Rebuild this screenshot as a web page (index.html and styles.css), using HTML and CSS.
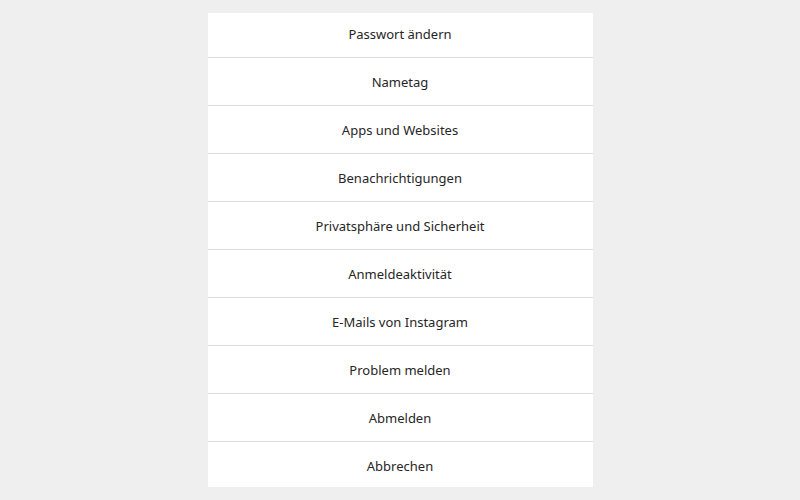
FILE: index.html
```html
<!DOCTYPE html>
<html lang="de">
<head>
    <meta charset="UTF-8">
    <meta name="viewport" content="width=device-width, initial-scale=1.0">
    <title>Einstellungen</title>
    <link rel="stylesheet" href="styles.css">
</head>
<body>
    <div class="menu">
        <div class="menu-list">
            <button class="menu-item">Passwort ändern</button>
            <button class="menu-item">Nametag</button>
            <button class="menu-item">Apps und Websites</button>
            <button class="menu-item">Benachrichtigungen</button>
            <button class="menu-item">Privatsphäre und Sicherheit</button>
            <button class="menu-item">Anmeldeaktivität</button>
            <button class="menu-item">E-Mails von Instagram</button>
            <button class="menu-item">Problem melden</button>
            <button class="menu-item">Abmelden</button>
            <button class="menu-item">Abbrechen</button>
        </div>
    </div>
</body>
</html>
```

FILE: styles.css
```css
body {
    margin: 0;
    background-color: #efefef;
    font-family: "Noto Sans", "Open Sans", Arial, sans-serif;
    color: #262626;
}

.menu {
    width: 385px;
    height: 474px;
    margin: 13px auto 0;
    background-color: #fff;
    overflow: hidden;
}

.menu-list {
    display: flex;
    flex-direction: column;
    margin-top: -4px;
}

.menu-item {
    height: 48px;
    box-sizing: border-box;
    border: none;
    border-top: 1px solid #dbdbdb;
    background: transparent;
    font-family: inherit;
    font-size: 13px;
    color: #262626;
    cursor: pointer;
    padding: 0 8px;
}

.menu-item:first-child {
    border-top-color: transparent;
}
```
